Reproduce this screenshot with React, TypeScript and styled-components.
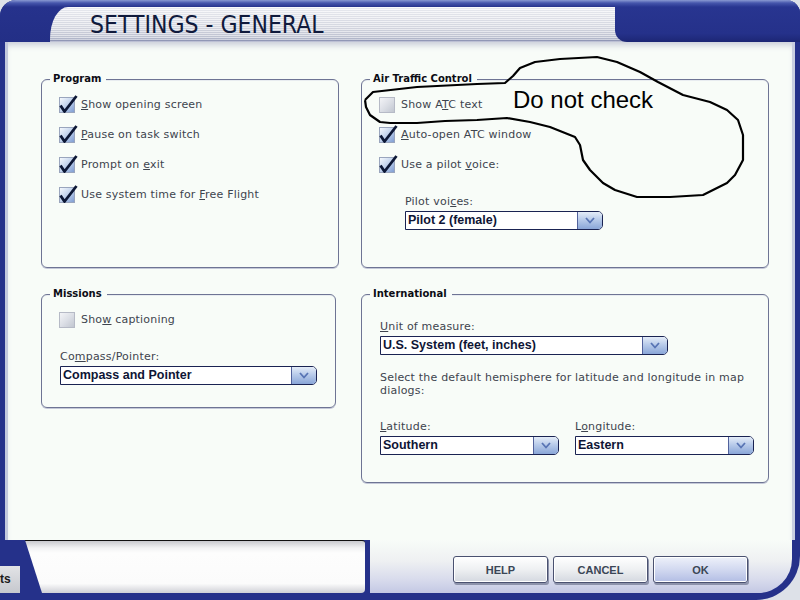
import React from 'react';
import styled, { createGlobalStyle } from 'styled-components';

const GlobalStyle = createGlobalStyle`
  html, body {
    margin: 0;
    padding: 0;
    background: #dde1e8;
  }
  body {
    font-family: "DejaVu Sans", Verdana, sans-serif;
  }
`;

const Window = styled.div`
  position: relative;
  width: 800px;
  height: 600px;
  display: flex;
  flex-direction: column;
  background: #25318a;
  border-radius: 16px 14px 44px 0;
  overflow: hidden;
`;

const Header = styled.header`
  height: 42px;
  flex: none;
  display: flex;
  align-items: flex-end;
  background: linear-gradient(#8a9ad2 0, #4656ac 3px, #26328c 7px, #232f86 100%);
`;

const TitleTab = styled.div`
  margin-left: 50px;
  width: 580px;
  height: 35px;
  box-sizing: border-box;
  padding-left: 40px;
  display: flex;
  align-items: center;
  border-top-left-radius: 18px 32px;
  background:
    repeating-linear-gradient(to bottom, rgba(255, 255, 255, 0.45) 0 1px, rgba(90, 96, 130, 0.08) 1px 2px),
    linear-gradient(#f4f5f8 0, #dfe1e8 55%, #c4c8d6 88%, #7d84aa 100%);
`;

const Title = styled.h1`
  margin: 0;
  font-family: "Liberation Sans Narrow", "DejaVu Sans Condensed", "Liberation Sans", sans-serif;
  font-weight: 400;
  font-size: 24.5px;
  letter-spacing: 0;
  color: #101a3c;
`;

const TitleCap = styled.div`
  flex: 1;
  align-self: stretch;
  margin-left: -15px;
  background: linear-gradient(#8a9ad2 0, #4656ac 3px, #283590 7px, #25318a 80%, #1c2674 100%);
  border-bottom-left-radius: 12px;
`;

const Main = styled.main`
  flex: 1;
  margin: 0 5px 0 5px;
  box-sizing: border-box;
  background: #f8fcf8;
  border-left: 3px solid #c2c8dc;
  border-right: 3px solid #c9cee0;
  box-shadow: inset 0 6px 6px -3px #c8ccd8;
  display: grid;
  grid-template-columns: 298px 408px;
  column-gap: 22px;
  row-gap: 26px;
  align-content: start;
  align-items: start;
  padding: 37px 0 0 33px;
`;

const Group = styled.section<{ $h: number; $w?: number }>`
  position: relative;
  box-sizing: border-box;
  height: ${p => p.$h}px;
  width: ${p => (p.$w ? `${p.$w}px` : 'auto')};
  border: 1px solid #6e7494;
  border-radius: 6px;
  box-shadow: 0 1px 0 #c4c8d8, inset 0 1px 0 #e8ecf0;
  padding: 17px 0 0 17px;
`;

const Legend = styled.h2`
  position: absolute;
  top: -8px;
  left: 8px;
  margin: 0;
  padding: 0 5px 0 3px;
  background: #f8fcf8;
  font-family: "DejaVu Sans", Verdana, sans-serif;
  font-weight: bold;
  font-size: 10px;
  line-height: 14px;
  color: #0c0c14;
`;

const CheckRow = styled.div`
  display: flex;
  align-items: center;
  height: 16px;
  margin-bottom: 14px;
`;

const Box = styled.span<{ $on: boolean }>`
  position: relative;
  width: 16px;
  height: 16px;
  box-sizing: border-box;
  flex: none;
  border: 1px solid ${p => (p.$on ? '#9aa5bd' : '#b6bac6')};
  background: ${p =>
    p.$on
      ? 'linear-gradient(135deg, #f6f9fd 0%, #c6d6ee 45%, #7f9dd2 100%)'
      : 'linear-gradient(135deg, #f3f4f7 0%, #dcdfe6 50%, #c1c6d0 100%)'};
`;

const Tick = styled.svg`
  position: absolute;
  left: -1px;
  top: -4px;
  overflow: visible;
`;

const Text = styled.span`
  font-size: 11px;
  letter-spacing: 0.2px;
  line-height: 14px;
  color: #3e444e;
`;

const Label = styled(Text)`
  margin-left: 6px;
`;

const Field = styled.div<{ $top: number; $left?: number }>`
  margin-top: ${p => p.$top}px;
  margin-left: ${p => p.$left ?? 0}px;
`;

const FieldLabel = styled(Text).attrs({ as: 'div' })`
  margin-bottom: 2px;
`;

const Note = styled(Text).attrs({ as: 'p' })`
  display: block;
  margin: 16px 0 0 0;
  width: 385px;
  line-height: 13px;
`;

const FieldPair = styled.div`
  display: flex;
  gap: 16px;
`;

const Select = styled.div<{ $w: number }>`
  width: ${p => p.$w}px;
  height: 19px;
  box-sizing: border-box;
  display: flex;
  border: 1px solid #1a2352;
  border-radius: 0 5px 5px 0;
  background: #ffffff;
`;

const SelectValue = styled.span`
  flex: 1;
  padding-left: 2px;
  font-family: "Liberation Sans", Arial, sans-serif;
  font-weight: bold;
  font-size: 12.5px;
  line-height: 17px;
  color: #0e1535;
  white-space: nowrap;
`;

const SelectArrow = styled.span`
  width: 24px;
  display: flex;
  align-items: center;
  justify-content: center;
  border-left: 1px solid #52629c;
  border-radius: 0 4px 4px 0;
  background: linear-gradient(#e4ecf8 0%, #b8cbea 45%, #8aa6d8 100%);
`;

const Footer = styled.footer`
  height: 60px;
  flex: none;
  display: flex;
  align-items: flex-start;
`;

const GhostTab = styled.div`
  width: 20px;
  height: 27px;
  margin-top: 26px;
  box-sizing: border-box;
  padding: 6px 0 0 0;
  background: linear-gradient(#e2e3e6, #c6c8ce);
  font-family: "Liberation Sans", Arial, sans-serif;
  font-weight: bold;
  font-size: 12px;
  color: #1a1a1a;
  overflow: hidden;
  white-space: nowrap;
`;

const StatusBox = styled.div`
  width: 340px;
  height: 53px;
  margin-left: 5px;
  box-sizing: border-box;
  border-top: 1px solid #111111;
  border-radius: 0 3px 4px 0;
  background: linear-gradient(#c9cacf 0, #f2f3f4 7px, #fdfdfd 12px, #fbfbfb 82%, #cfd0d6 100%);
  clip-path: polygon(0 0, 100% 0, 100% 100%, 17px 100%);
`;

const ButtonArea = styled.div`
  flex: 1;
  height: 53px;
  margin: 0 8px 0 5px;
  box-sizing: border-box;
  display: flex;
  justify-content: flex-end;
  gap: 5px;
  padding: 16px 44px 0 0;
  border-bottom-right-radius: 34px;
  background: linear-gradient(#f8fcf8 0%, #eef0f2 40%, #d8dbec 75%, #c3c8e4 100%);
`;

const Btn = styled.button<{ $primary?: boolean }>`
  width: 95px;
  height: 27px;
  box-sizing: border-box;
  border: 1px solid #4a5170;
  border-radius: 3px;
  background: ${p =>
    p.$primary
      ? 'linear-gradient(#eef1fa 0%, #d2d9f0 50%, #b2bde4 100%)'
      : 'linear-gradient(#ffffff 0%, #eef0f2 50%, #d4d8e0 100%)'};
  box-shadow: 1px 2px 0 #8d93ab, inset 0 0 0 1px #ffffff;
  font-family: "Liberation Sans", Arial, sans-serif;
  font-weight: bold;
  font-size: 11px;
  color: #3a4656;
  padding: 0;
`;

const Annotation = styled.div`
  position: absolute;
  inset: 0;
  pointer-events: none;
`;

const Scribble = styled.svg`
  position: absolute;
  left: 0;
  top: 0;
`;

const Remark = styled.span`
  position: absolute;
  left: 513px;
  top: 86px;
  font-family: "Liberation Sans", Arial, sans-serif;
  font-size: 24px;
  color: #000000;
  white-space: nowrap;
`;

function Check({ on, children }: { on: boolean; children: React.ReactNode }) {
  return (
    <CheckRow>
      <Box $on={on}>
        {on && (
          <Tick width="18" height="20" viewBox="0 0 18 20">
            <path d="M1.5 11.5 L5.5 17.5 L17.5 2" stroke="#0d1836" strokeWidth="2.8" fill="none" strokeLinejoin="round" />
          </Tick>
        )}
      </Box>
      <Label>{children}</Label>
    </CheckRow>
  );
}

function Dropdown({ width, value }: { width: number; value: string }) {
  return (
    <Select $w={width}>
      <SelectValue>{value}</SelectValue>
      <SelectArrow>
        <svg width="10" height="7" viewBox="0 0 10 7">
          <path d="M1 1 L5 5.5 L9 1" stroke="#5874b4" strokeWidth="1.8" fill="none" />
        </svg>
      </SelectArrow>
    </Select>
  );
}

const scribblePoints = [
  [365, 100], [373, 92], [417, 87], [477, 84], [505, 83], [513, 76], [520, 68], [535, 62],
  [560, 59], [597, 57], [617, 62], [640, 72], [658, 82], [683, 95], [710, 102], [727, 110],
  [738, 120], [743, 135], [743, 160], [735, 175], [727, 183], [703, 195], [670, 197], [637, 197],
  [615, 190], [603, 183], [590, 170], [583, 160], [580, 145], [575, 137], [550, 127], [530, 122],
  [507, 118], [477, 120], [445, 121], [417, 123], [390, 123], [380, 122], [370, 115], [366, 107], [365, 100],
]
  .map(p => p.join(','))
  .join(' ');

export default function App() {
  return (
    <>
      <GlobalStyle />
      <Window>
        <Header>
          <TitleTab>
            <Title>SETTINGS - GENERAL</Title>
          </TitleTab>
          <TitleCap />
        </Header>

        <Main>
          <Group $h={189}>
            <Legend>Program</Legend>
            <Check on><u>S</u>how opening screen</Check>
            <Check on><u>P</u>ause on task switch</Check>
            <Check on>Prompt on <u>e</u>xit</Check>
            <Check on>Use system time for <u>F</u>ree Flight</Check>
          </Group>

          <Group $h={189}>
            <Legend>Air Traffic Control</Legend>
            <Check on={false}>Show A<u>T</u>C text</Check>
            <Check on><u>A</u>uto-open ATC window</Check>
            <Check on>Use a pilot <u>v</u>oice:</Check>
            <Field $top={22} $left={26}>
              <FieldLabel>Pilot voi<u>c</u>es:</FieldLabel>
              <Dropdown width={198} value="Pilot 2 (female)" />
            </Field>
          </Group>

          <Group $h={114} $w={295}>
            <Legend>Missions</Legend>
            <Check on={false}>Sho<u>w</u> captioning</Check>
            <Field $top={22} $left={1}>
              <FieldLabel>Co<u>m</u>pass/Pointer:</FieldLabel>
              <Dropdown width={257} value="Compass and Pointer" />
            </Field>
          </Group>

          <Group $h={189}>
            <Legend>International</Legend>
            <Field $top={8} $left={1}>
              <FieldLabel><u>U</u>nit of measure:</FieldLabel>
              <Dropdown width={288} value="U.S. System (feet, inches)" />
            </Field>
            <Field $top={0} $left={1}>
              <Note>Select the default hemisphere for latitude and longitude in map dialogs:</Note>
            </Field>
            <Field $top={23} $left={1}>
              <FieldPair>
                <div>
                  <FieldLabel><u>L</u>atitude:</FieldLabel>
                  <Dropdown width={179} value="Southern" />
                </div>
                <div>
                  <FieldLabel>L<u>o</u>ngitude:</FieldLabel>
                  <Dropdown width={179} value="Eastern" />
                </div>
              </FieldPair>
            </Field>
          </Group>
        </Main>

        <Footer>
          <GhostTab>ts</GhostTab>
          <StatusBox />
          <ButtonArea>
            <Btn>HELP</Btn>
            <Btn>CANCEL</Btn>
            <Btn $primary>OK</Btn>
          </ButtonArea>
        </Footer>

        <Annotation>
          <Scribble width="800" height="600" viewBox="0 0 800 600">
            <polyline points={scribblePoints} fill="none" stroke="#000" strokeWidth="2.2" strokeLinejoin="round" />
          </Scribble>
          <Remark>Do not check</Remark>
        </Annotation>
      </Window>
    </>
  );
}
